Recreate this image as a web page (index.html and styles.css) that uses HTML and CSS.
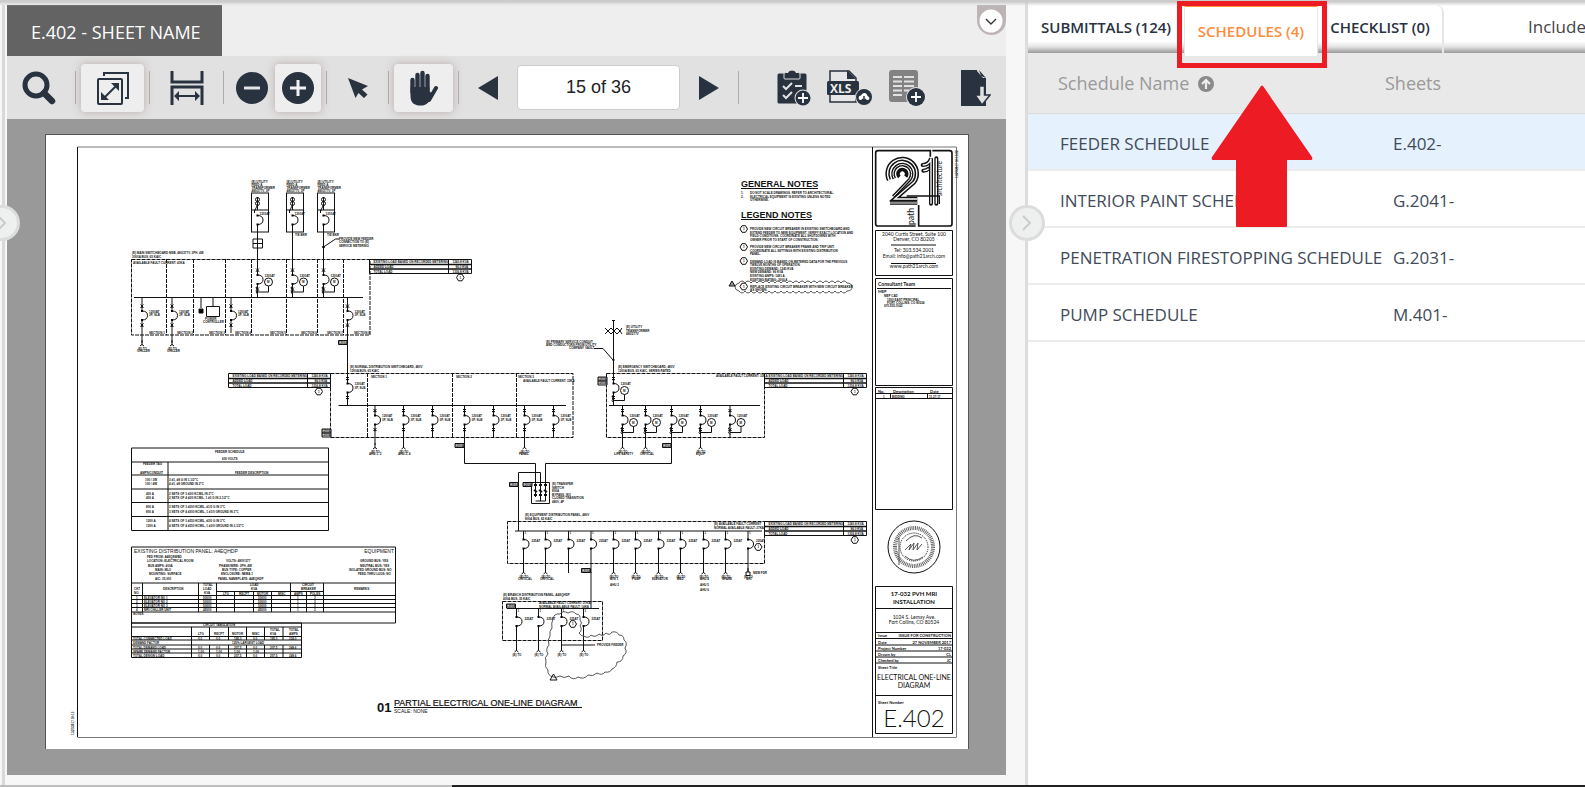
FILE: index.html
```html
<!DOCTYPE html>
<html lang="en">
<head>
<meta charset="utf-8">
<title>E.402 - Sheet Name</title>
<link rel="stylesheet" href="styles.css">
</head>
<body>
<div class="app">
<main class="workspace">
  <section class="viewer">
    <header class="viewer-head">
      <h1 class="sheet-tab">E.402 - SHEET NAME</h1>
      <button class="collapse" aria-label="Collapse header"><svg width="24" height="24" viewBox="0 0 24 24"><circle cx="12" cy="12" r="11.5" fill="#fff"/><path d="M7 10l5 5 5-5" fill="none" stroke="#333" stroke-width="1.4"/></svg></button>
    </header>
    <div class="toolbar">
      <button class="tool w-search" aria-label="Search"><svg width="34" height="34" viewBox="0 0 34 34"><circle cx="14" cy="14" r="11" fill="none" stroke="#29323f" stroke-width="5"/><path d="M22 22l8 8" stroke="#29323f" stroke-width="6.500" stroke-linecap="round"/></svg></button>
      <span class="sep"></span>
      <button class="tool active w-wide" aria-label="Fit page"><svg width="34" height="34" viewBox="0 0 34 34" fill="none" stroke="#29323f" stroke-width="2"><rect x="2" y="8" width="24" height="25" rx="1"/><path d="M8 5V2h24v25h-3" /><path d="M8 27L21 14"/><path d="M15 12h8v8zM5 21v8h8z" fill="#29323f" stroke="none"/></svg></button>
      <span class="sep"></span>
      <button class="tool w-wide" aria-label="Fit width"><svg width="34" height="34" viewBox="0 0 34 34" fill="none" stroke="#29323f" stroke-width="2"><path d="M2 0v11h30V0M2 34V16h30v18" stroke-width="3"/><path d="M5 25h24"/><path d="M4 25l5-5v10zM30 25l-5-5v10z" fill="#29323f" stroke="none"/></svg></button>
      <span class="sep"></span>
      <button class="tool w-zoom" aria-label="Zoom out"><svg width="32" height="32" viewBox="0 0 32 32"><circle cx="16" cy="16" r="16" fill="#29323f"/><path d="M8 16h16" stroke="#e5e5e5" stroke-width="3"/></svg></button>
      <button class="tool active w-zoom" aria-label="Zoom in"><svg width="32" height="32" viewBox="0 0 32 32"><circle cx="16" cy="16" r="16" fill="#29323f"/><path d="M8 16h16M16 8v16" stroke="#f2f2f2" stroke-width="3"/></svg></button>
      <span class="sep"></span>
      <button class="tool w-cursor" aria-label="Select"><svg width="22" height="22" viewBox="0 0 22 22" fill="#29323f"><path d="M1 1l20 8-6 3.500 5.500 5-3.500 3.500L11.500 16l-3 5z"/></svg></button>
      <span class="sep"></span>
      <button class="tool active w-hand" aria-label="Pan"><svg width="28" height="36" viewBox="0 0 28 36" fill="none" stroke="#29323f" stroke-linecap="round" stroke-linejoin="round"><path d="M2.500 10v12M7.500 5v15M12.500 3v17M17.500 6v15" stroke-width="4.400"/><path d="M26 18l-7 12" stroke-width="4"/><path d="M.5 17v9c0 7 4 9.500 10 9.500 5 0 7-1.500 9-5l4-6-4-3V17z" fill="#29323f" stroke="none"/></svg></button>
      <span class="sep"></span>
      <button class="tool w-step" aria-label="Previous page"><svg width="20" height="24" viewBox="0 0 20 24"><path d="M20 0v24L0 12z" fill="#29323f"/></svg></button>
      <input class="page-no" type="text" value="15 of 36" aria-label="Page">
      <button class="tool w-step" aria-label="Next page"><svg width="20" height="24" viewBox="0 0 20 24"><path d="M0 0v24l20-12z" fill="#29323f"/></svg></button>
      <span class="sep"></span>
      <div class="exports">
        <button class="tool" aria-label="Add checklist"><svg width="34" height="36" viewBox="0 0 34 36"><path d="M2 3.500h6v4h14v-4h6q1.500 0 1.500 1.500v27q0 1.500-1.500 1.500H2q-1.500 0-1.500-1.500V5Q.5 3.500 2 3.500z" fill="#29323f"/><path d="M7 7V4q0-1.500 1.500-1.500H11Q11.500 0 15 0t4 2.500h2.500Q23 2.500 23 4v4q0 1-1 1H8Q7 9 7 8z" fill="#29323f" stroke="#e1e1e1"/><path d="M6 16l3 3 6-6M6 25l3 3 6-6M18 16h7" fill="none" stroke="#e1e1e1" stroke-width="2"/><circle cx="26" cy="28" r="8.500" fill="#e1e1e1"/><circle cx="26" cy="28" r="7.500" fill="#29323f"/><path d="M21 28h10M26 23v10" stroke="#fff" stroke-width="1.800"/></svg></button>
        <button class="tool" aria-label="Download XLS"><svg width="46" height="36" viewBox="0 0 46 36"><path d="M3 1h19l7 7v24H3z" fill="#e6e6e6" stroke="#29323f" stroke-width="1.500"/><path d="M20 0l9 9h-9z" fill="#29323f"/><rect y="11" width="32" height="14" rx="1.500" fill="#29323f"/><text x="3" y="23" class="xls">XLS</text><circle cx="37" cy="27" r="9" fill="#e1e1e1"/><circle cx="37" cy="27" r="8" fill="#29323f"/><path d="M33 30q-2-1-1-3.500 1-1 2-1 1-3 4-2.500 2 .5 2.500 3 2 .5 2 2.500-.5 1.500-2 1.500z" fill="#fff"/><path d="M37 26v5M35 29l2 2.500 2-2.500" fill="none" stroke="#29323f" stroke-width="1.500"/></svg></button>
        <button class="tool" aria-label="Add schedule"><svg width="38" height="36" viewBox="0 0 38 36"><rect width="29" height="32" rx="3" fill="#828282"/><path d="M4 7h9M15 7h10M4 11.500h9M15 11.500h10M4 16h9M15 16h10M4 20.500h9M15 20.500h5M4 25h9" stroke="#e1e1e1" stroke-width="2"/><circle cx="27" cy="27" r="10" fill="#e1e1e1"/><circle cx="27" cy="27" r="9" fill="#29323f"/><path d="M22 27h10M27 22v10" stroke="#fff" stroke-width="1.800"/></svg></button>
      </div>
      <button class="tool export" aria-label="Export sheet"><svg width="30" height="36" viewBox="0 0 30 36"><path d="M0 0h16l9 8v28H0z" fill="#29323f"/><path d="M16 0v1l6 7h3V6l-5-6z" fill="#e1e1e1"/><path d="M18 0l7 8-5-2z" fill="#29323f"/><path d="M18.500 16h5v9H29l-8 10-7-10h4.500z" fill="#e1e1e1" stroke="#29323f" stroke-width="1.500"/></svg></button>
    </div>
    <div class="canvas">
<svg class="paper" viewBox="45 134 924 615" role="img" aria-label="Partial electrical one-line diagram">
<defs>
  <g id="x"><path d="M-1.500-1.500l3 3m0-3l-3 3"/><path d="M-1.200 1.200h2.400"/></g>
  <g id="arc"><path d="M0 0q5.500 0 5.500 4.500T0 9"/><rect x="-1" y="-1" width="2" height="2" fill="#000" stroke="none"/><rect x="-1" y="8" width="2" height="2" fill="#000" stroke="none"/></g>
  <g id="gnd"><path d="M0-5V0M-2 1q2-3 4 0"/><text x="-4" y="4.500">(E) TO</text></g>
  <g id="brk"><path d="M0 0v10M0 19v13"/><use href="#x" y="5"/><use href="#arc" y="10"/><use href="#x" y="24"/><text x="7" y="11.500">1200AT</text><text x="7" y="15">3P, SLB</text></g>
  <g id="meter"><path d="M0 0v10M0 19v13"/><use href="#x" y="5"/><use href="#arc" y="10"/><use href="#x" y="24"/><text x="7" y="11.500">1200AT</text><circle cx="11" cy="17" r="4" fill="#fff"/><text x="9.500" y="18">M</text><path d="M11 21v6H0"/><path d="M0 21q-3 2 0 4-3 2 0 4"/></g>
  <g id="sw"><path d="M0 0v9M0 17v25"/><use href="#arc" y="8.500"/><text x="8" y="11">225AT</text><text x="1" y="3">1</text></g>
  <g id="hex"><path d="M-3.500 0l2-3.300h3.500l2 3.300-2 3.300h-3.500z" fill="#fff"/><text x="-.5" y="1">1</text></g>
  <g id="xf"><rect width="17" height="39" fill="#fff"/><path d="M0 17h17M6 4v13M6 32v8"/><circle cx="6" cy="6.500" r="2"/><circle cx="6" cy="10.500" r="2"/><path d="M6 12l-3 6M3 17v3"/><use href="#arc" x="6" y="22.500"/><text x="8" y="22">1200AT</text><text y="-10">(E) UTILITY</text><text y="-7">FEED A</text><text y="-4">TRANSFORMER</text><text y="-1">480/277V, 3P</text></g>
  <g id="loads"><path d="M0 0h102M0 14h102"/><path d="M0 5h102M0 9.500h102" stroke-width="1.600"/><path d="M0 0v14M79 0v14M102 0v14"/><text x="4" y="3.600">EXISTING LOAD BASED ON RECORDED METERING</text><text x="4" y="8.200">ADDED LOAD</text><text x="4" y="13">TOTAL LOAD</text><text x="83" y="3.600">1240.8 KVA</text><text x="86" y="8.200">96.0 KVA</text><text x="83" y="13">1336.8 KVA</text></g>
  <g id="tag"><path d="M0 0h9v4H0z" fill="#ddd"/><text x="0" y="3">1200A</text></g>
</defs>
<g class="ink">
  <!-- sheet frame -->
  <path d="M45.500 134v615M968.500 134v615M45 134.500h924" stroke="#555"/>
  <path d="M77.500 147h879M956.500 147v590M77.500 737.500h879" stroke="#777"/><path d="M77.500 147v590M872.500 147v590"/>
  <path d="M875.500 230.500h77v45h-77zM875.500 278.500h77v107h-77zM875.500 387.500h77v122h-77zM875.500 586.500h77v147h-77z"/>
  <path d="M875.500 608.500h77M875.500 632.500h77M875.500 638.500h77M875.500 645h77M875.500 651h77M875.500 657h77M875.500 663h77M875.500 695.500h77M875.500 393.500h77M875.500 398.500h77M890.500 393v5M927.500 393v5M877 288.500h74"/>
  <!-- main switchboard -->
  <g class="dash"><path d="M131.500 259.500h238.500v75.500h-238.500z"/><path d="M166.500 259v76M193.500 259v76M225.500 259v76M251.500 259v76M286.500 259v76M317.500 259v76M343.500 259v76"/></g>
  <path d="M134 297.500h229" stroke-width="1.200"/>
  <use href="#xf" x="251.500" y="193"/><use href="#xf" x="286.500" y="193"/><use href="#xf" x="317.500" y="193"/>
  <path d="M257.500 232v33M292.500 232v33M323.500 232v33"/>
  <path d="M253 239h9.500v9H253zM253 243.500h9.500"/><path d="M323.500 247l12-8h4"/><circle cx="323.500" cy="247" r="1" fill="#000"/>
  <use href="#meter" x="257.500" y="265"/><use href="#meter" x="292.500" y="265"/><use href="#meter" x="323.500" y="265"/>
  <use href="#brk" x="142" y="301"/><use href="#brk" x="172" y="301"/><use href="#brk" x="231" y="301"/><use href="#brk" x="347.500" y="301"/>
  <path d="M142 297v4M172 297v4M231 297v4M347.500 297v4M142 333v10M172 333v10M347.500 333v44M201 297v11M213 297v9"/>
  <path d="M199 309h4v4h-4z" fill="#000"/><path d="M206.500 306.500h13v10h-13z"/>
  <use href="#gnd" x="142" y="345"/><use href="#gnd" x="172" y="345"/><use href="#tag" x="338.500" y="340.500"/>
  <use href="#loads" x="369.500" y="259.500"/><use href="#hex" x="460" y="277.500"/>
  <!-- switchboard A -->
  <g class="dash"><path d="M330.500 373.500H573v64H330.500zM367.500 373v64M452.500 373v64M516.500 373v64M606.500 373.500h158v64h-158z"/></g>
  <path d="M338.500 405.500H566M609 405.500h151" stroke-width="1.200"/>
  <use href="#brk" x="347.500" y="373.500"/><use href="#brk" x="375" y="405.500"/><use href="#brk" x="403.500" y="405.500"/><use href="#brk" x="432.500" y="405.500"/><use href="#brk" x="464.500" y="405.500"/><use href="#brk" x="493.500" y="405.500"/><use href="#brk" x="524.500" y="405.500"/><use href="#brk" x="553.500" y="405.500"/>
  <path d="M375 437v8M403.500 437v8M524.500 437v8M464.500 437v26.500h71V497"/>
  <use href="#gnd" x="375" y="448"/><use href="#gnd" x="403.500" y="448"/><use href="#gnd" x="524.500" y="448"/>
  <use href="#tag" x="455" y="443.500"/><use href="#tag" x="322" y="429"/><use href="#tag" x="322" y="433"/>
  <use href="#loads" x="228.500" y="373.500"/><use href="#hex" x="318.500" y="391.500"/>
  <!-- switchboard B -->
  <use href="#meter" x="613.500" y="373.500"/><path d="M613.500 320v54M612 320.500h3M594 348.500h9l10 11.500"/><circle cx="613.500" cy="360" r=".8"/>
  <path d="M605 328l3 3 3-3 3 3 3-3 3 3 2-3M605 334l3-3 3 3 3-3 3 3 3-3 2 3"/>
  <use href="#meter" x="622.500" y="405.500"/><use href="#meter" x="645.500" y="405.500"/><use href="#meter" x="671.500" y="405.500"/><use href="#meter" x="700.500" y="405.500"/><use href="#meter" x="730" y="405.500"/>
  <path d="M622.500 437v8M645.500 437v8M700.500 437v8M671.500 437v26.500h-126V497"/>
  <use href="#gnd" x="622.500" y="448"/><use href="#gnd" x="645.500" y="448"/><use href="#gnd" x="700.500" y="448"/>
  <use href="#tag" x="662.500" y="443.500"/><use href="#tag" x="598" y="377"/><use href="#tag" x="598" y="381"/>
  <use href="#loads" x="764.500" y="373.500"/><use href="#hex" x="854.500" y="391.500"/>
  <!-- transfer switch -->
  <path d="M531.500 482.500h18v21h-18zM540.500 497v-24.500h-22V531M535.500 501h10v-4M540.500 497v4"/><path d="M534 485h3M539 485h3M544 485h3M534 495h3M539 495h3M544 495h3M534 490l3 2M539 490l3 2M544 490l3 2" stroke-width="2"/>
  <use href="#tag" x="509.500" y="482.500"/><use href="#tag" x="523" y="482.500"/>
  <!-- switchboard C -->
  <g class="dash"><path d="M507.500 521.500h257v42h-257zM502.500 601.500h100v39h-100z"/></g>
  <path d="M515 531h247M507 608.500h92"/>
  <use href="#sw" x="523.500" y="531"/><use href="#sw" x="545.500" y="531"/><use href="#sw" x="568.500" y="531"/><use href="#sw" x="591" y="531"/><use href="#sw" x="613.500" y="531"/><use href="#sw" x="635.500" y="531"/><use href="#sw" x="658.500" y="531"/><use href="#sw" x="680.500" y="531"/><use href="#sw" x="703.500" y="531"/><use href="#sw" x="725.500" y="531"/><use href="#sw" x="748" y="531"/>
  <path d="M591 572v36"/><use href="#tag" x="581.500" y="568.500"/>
  <use href="#gnd" x="523.500" y="573"/><use href="#gnd" x="545.500" y="573"/><use href="#gnd" x="613.500" y="573"/><use href="#gnd" x="635.500" y="573"/><use href="#gnd" x="658.500" y="573"/><use href="#gnd" x="680.500" y="573"/><use href="#gnd" x="703.500" y="573"/><use href="#gnd" x="725.500" y="573"/><use href="#gnd" x="748" y="573"/>
  <path d="M746 572h4v3.500h-4z" fill="#fff"/>
  <use href="#loads" x="764.500" y="521.500"/><use href="#hex" x="854.500" y="540"/><use href="#hex" x="758" y="547"/>
  <use href="#sw" x="516.500" y="608.500"/><use href="#sw" x="538.500" y="608.500"/><use href="#sw" x="561.500" y="608.500"/><use href="#sw" x="583.500" y="608.500"/>
  <use href="#gnd" x="516.500" y="651"/><use href="#gnd" x="538.500" y="651"/><use href="#gnd" x="561.500" y="651"/><use href="#gnd" x="583.500" y="651"/>
  <use href="#tag" x="506.500" y="604"/><use href="#hex" x="572.500" y="624"/><path d="M562 645h33"/>
  <path class="cloud" d="M553 619q1-6 7-5q3-4 8-1q5-3 8 1q5 0 4 6q3 3 0 6q3 4-1 7q3 4 5 3q4 3 7-1q4 3 8-1q4 3 7-1q4 3 6-1q5-1 7 3q5 0 5 5q4 3 1 8q3 5-2 8q0 6-6 6q0 5-5 7q-2 4-7 3q-3 4-8 1q-4 4-9 2q-4 5-10 2q-5 4-9-1q-5 3-9 0q-4 2-7 1q-6-2-5-7q-4-3-2-8q-2-5 2-8q-3-5 1-9q-2-5 1-9q-1-5 2-8q-1-5 1-9z"/><path d="M550 680l3.500-6 3.500 6z"/>
  <!-- schedules -->
  <path d="M131.500 448h197v82.500h-197zM168 462v68.500M131.500 462h197M131.500 475h197M131.500 489h197M131.500 502.500h197M131.500 516.500h197"/>
  <path d="M131.500 547h264v76h-264zM131.500 583h264M216.500 591.500h107M131.500 595.500h264M131.500 599.500h264M131.500 603.500h264M131.500 607.500h264M131.500 612h264M142.500 583v29M198.500 583v29M216.500 583v29M234.500 591v21M253.500 591v21M271.500 591v21M290.500 583v29M306.500 591v21M323.500 583v29"/>
  <path d="M131.500 623h170v34.500h-170zM131.500 627h170M131.500 636.500h170M131.500 640h170M131.500 645h170M131.500 649h170M131.500 653h170M191.500 627v30M209.500 627v13M228.500 627v13M246.500 627v13M264.500 627v13M283 627v13M209.500 645v12M228.500 645v12M246.500 645v12M264.500 645v12M283 645v12"/>
  <!-- legend -->
  <path d="M741 188.500h77M741 219.500h71M394 707.500h188"/>
  <use href="#hex" x="743.500" y="229"/><use href="#hex" x="743.500" y="247"/><use href="#hex" x="743.500" y="261"/><use href="#hex" x="743.500" y="286.500"/>
  <path class="cloud" d="M739 283q3-4 6 0q3-4 6 0q3-4 6 0q3-4 6 0q3-4 6 0q3-4 6 0q3-4 6 0q3-4 6 0q3-4 6 0q3-4 6 0q3-4 6 0q3-4 6 0q3-4 6 0q3-4 6 0q3-4 6 0q3-4 6 0q3-4 6 0q3-4 6 0q5 0 5 4q0 4-5 4q-3 4-6 0q-3 4-6 0q-3 4-6 0q-3 4-6 0q-3 4-6 0q-3 4-6 0q-3 4-6 0q-3 4-6 0q-3 4-6 0q-3 4-6 0q-3 4-6 0q-3 4-6 0q-3 4-6 0q-3 4-6 0q-3 4-6 0q-3 4-6 0q-3 4-6 0q-3 4-6 0q-4-1-4-4t4-4z"/><path d="M729 286l3-5 3 5z" fill="#999"/>
  <!-- seal -->
  <circle cx="914" cy="547" r="26"/><circle cx="914" cy="547" r="19" stroke-width="4" stroke-dasharray="1 .8" stroke="#666"/><circle cx="914" cy="547" r="14" stroke-dasharray="1 1"/><path d="M905 550l6-6-2 6 5-7-1 7 5-7-1 7 5-6M899 538v27M905 556q8 8 18 1M906 541q8-9 16-3" stroke="#555"/>
  <!-- practice logo -->
  <g transform="translate(860 130) scale(.3333)">
    <path d="M211 80V62H54q-7 0-7 7v212q0 7 7 7h113M217 62h52q7 0 7 7v212q0 7-7 7h-93v-63" stroke-width="5"/>
    <path d="M87 150A44 44 0 1 1 162 157L104 207h68" stroke-width="13"/><path d="M103 146A28 28 0 1 1 149 149L100 200" stroke-width="11"/><path d="M118 141A13 13 0 1 1 137 140M90 219h82" stroke-width="11"/>
    <path d="M87 150A44 44 0 1 1 162 157L104 207h68" stroke="#fff" stroke-width="4"/><path d="M103 146A28 28 0 1 1 149 149L100 200M90 219h82" stroke="#fff" stroke-width="3"/>
    <path d="M188 105q20 0 25-20v136M190 122q10 0 16-6M229 85v136" stroke-width="12" stroke-linecap="round"/><path d="M188 105q20 0 25-20v136M190 122q10 0 16-6M229 85v136" stroke="#fff" stroke-width="4"/>
    <path d="M140 198h98v24" stroke-width="4"/>
    <text class="logo" transform="translate(247 198) rotate(-90)">architecture</text><text class="logo big" transform="translate(163 285) rotate(-90)">path</text>
  </g>
  <path d="M891 245h45M891 263.500h45"/>
</g>
<g class="lettering">
  <text x="741" y="187" class="h">GENERAL NOTES</text><text x="741" y="218" class="h">LEGEND NOTES</text>
  <text x="377" y="712" class="num">01</text><text x="394" y="706" class="title">PARTIAL ELECTRICAL ONE-LINE DIAGRAM</text><text x="394" y="713" class="s5">SCALE: NONE</text>
  <text x="741" y="194">1.</text><text x="750" y="194">DO NOT SCALE DRAWINGS. REFER TO ARCHITECTURAL.</text><text x="741" y="198">2.</text><text x="750" y="198">ELECTRICAL EQUIPMENT IS EXISTING UNLESS NOTED</text><text x="750" y="201">OTHERWISE.</text>
  <text x="750" y="230">PROVIDE NEW CIRCUIT BREAKER IN EXISTING SWITCHBOARD AND</text><text x="750" y="233.500">EXTEND FEEDER TO NEW EQUIPMENT. VERIFY EXACT LOCATION AND</text><text x="750" y="237">FIELD CONDITIONS. COORDINATE ALL SHUTDOWNS WITH</text><text x="750" y="241">OWNER PRIOR TO START OF CONSTRUCTION.</text>
  <text x="750" y="248">PROVIDE NEW CIRCUIT BREAKER FRAME AND TRIP UNIT.</text><text x="750" y="252">COORDINATE ALL SETTINGS WITH EXISTING DISTRIBUTION</text><text x="750" y="255">PANEL.</text>
  <text x="750" y="263">DEMAND LOAD IS BASED ON METERED DATA FOR THE PREVIOUS</text><text x="750" y="266">TWELVE MONTHS OF OPERATION.</text><text x="750" y="270">EXISTING DEMAND: 1240 KVA</text><text x="750" y="273">NEW DEMAND: 96 KVA</text><text x="750" y="277">EXISTING AMPS: 1491 A</text><text x="750" y="281">EXISTING RATING: 3000 A</text><text x="750" y="288">REPLACE EXISTING CIRCUIT BREAKER WITH NEW CIRCUIT BREAKER</text><text x="750" y="291">AS SHOWN.</text>
  <text x="132" y="254">(E) MAIN SWITCHBOARD MSB, 480/277V, 3PH, 4W</text><text x="132" y="258">3000A BUS, 65 KAIC</text><text x="133" y="264">AVAILABLE FAULT CURRENT: 41KA</text>
  <text x="339" y="240">PROVIDE NEW FEEDER</text><text x="339" y="243">CONNECTION TO (E)</text><text x="339" y="247">SERVICE METERING</text><text x="295" y="236">TIE BKR</text><text x="327" y="236">TIE BKR</text>
  <text x="149" y="334">SECTION 1</text><text x="177" y="334">SECTION 2</text><text x="209" y="334">SECTION 3</text><text x="235" y="334">SECTION 4</text><text x="270" y="334">SECTION 5</text><text x="301" y="334">SECTION 6</text><text x="327" y="334">SECTION 7</text><text x="354" y="334">SECTION 8</text><text x="205" y="320">POWER</text><text x="203" y="323">CONTROLLER</text>
  <text x="137" y="352">CHILLER</text><text x="167" y="352">CHILLER</text>
  <text x="350" y="368">(E) NORMAL DISTRIBUTION SWITCHBOARD, 480V</text><text x="350" y="372">1200A BUS, 65 KAIC</text><text x="371" y="378">SECTION 1</text><text x="456" y="378">SECTION 2</text><text x="518" y="378">SECTION 3</text><text x="523" y="382">AVAILABLE FAULT CURRENT: 32KA</text><text x="716" y="377">AVAILABLE FAULT CURRENT: 32KA</text>
  <text x="618" y="368">(E) EMERGENCY SWITCHBOARD, 480V</text><text x="618" y="372">1200A BUS, 65 KAIC, SERIES RATED</text>
  <text x="546" y="343">(E) PRIMARY SERVICE CONDUIT</text><text x="546" y="346">AND CONDUCTORS FROM UTILITY</text><text x="569" y="349">COMPANY VAULT</text><text x="626" y="328">(E) UTILITY</text><text x="626" y="332">TRANSFORMER</text><text x="626" y="335">480/277V</text>
  <text x="369" y="455">AHU-1, 2</text><text x="398" y="455">AHU-3, 4</text><text x="519" y="455">PANEL</text><text x="614" y="455">LIFE SAFETY</text><text x="640" y="455">CRITICAL</text><text x="696" y="455">EQUIP</text>
  <text x="552" y="485">(E) TRANSFER</text><text x="552" y="489">SWITCH</text><text x="552" y="492">800A</text><text x="552" y="496">BYPASS, ISO</text><text x="552" y="499">CLOSED TRANSITION</text><text x="552" y="503">480V, 4P</text>
  <text x="525" y="516">(E) EQUIPMENT DISTRIBUTION PANEL, 480V</text><text x="525" y="520">800A BUS, 65 KAIC</text><text x="714" y="525">(E) AVAILABLE FAULT CURRENT</text><text x="714" y="529">NORMAL AVAILABLE FAULT: 27KA</text>
  <text x="518" y="580">CRITICAL</text><text x="540" y="580">CRITICAL</text><text x="610" y="580">ATS 1</text><text x="610" y="586">AHU 2</text><text x="632" y="580">PUMP</text><text x="652" y="580">ELEVATOR</text><text x="677" y="580">MED</text><text x="700" y="580">AHU 4</text><text x="700" y="586">AHU 5</text><text x="700" y="591">AHU 6</text><text x="722" y="580">SPARE</text><text x="746" y="580">MRI</text><text x="753" y="574">NEW FDR</text>
  <text x="503" y="596">(E) BRANCH DISTRIBUTION PANEL, A4EQHDP</text><text x="503" y="600">400A BUS, 35 KAIC</text><text x="539" y="604">AVAILABLE FAULT CURRENT: 27KA</text><text x="539" y="608">NORMAL AVAILABLE FAULT: 14KA</text><text x="597" y="646">PROVIDE FEEDER</text>
  <g class="dense"><text x="215" y="452.500" class="s4">FEEDER SCHEDULE</text><text x="222" y="460">600 VOLTS</text><text x="143" y="465">FEEDER TAG</text><text x="140" y="474">AMPS/CONDUIT</text><text x="235" y="474">FEEDER DESCRIPTION</text><text x="145" y="481">100 / 3W</text><text x="145" y="485">100 / 4W</text><text x="169" y="481">3 #1, #8 G IN 1-1/2"C</text><text x="169" y="485">4 #1, #8 GROUND IN 2"C</text><text x="146" y="495">400 A</text><text x="146" y="499">400 A</text><text x="169" y="495">2 SETS OF 3 #3/0 KCMIL IN 2"C</text><text x="169" y="499">2 SETS OF 4 #3/0 KCMIL, 1 #3 G IN 2-1/2"C</text><text x="146" y="508">800 A</text><text x="146" y="513">800 A</text><text x="169" y="508">3 SETS OF 3 #300 KCMIL, #1/0 G IN 3"C</text><text x="169" y="513">3 SETS OF 4 #300 KCMIL, 1 #1/0 GROUND IN 3"C</text><text x="146" y="522">1200 A</text><text x="146" y="527">1200 A</text><text x="169" y="522">4 SETS OF 3 #350 KCMIL, #3/0 G IN 3"C</text><text x="169" y="527">4 SETS OF 4 #350 KCMIL, 1 #3/0 GROUND IN 3-1/2"C</text></g>
  <text x="134" y="553" class="s5">EXISTING DISTRIBUTION PANEL: A4EQHDP</text><text x="394" y="553" class="s5 end">EQUIPMENT</text>
  <g class="dense"><text x="147" y="558">FED FROM:  A4EQSWBD</text><text x="147" y="562">LOCATION:  ELECTRICAL ROOM</text><text x="148" y="567">BUS AMPS:  400A</text><text x="155" y="571">MAIN:  MLO</text><text x="149" y="575">MOUNTING:  SURFACE</text><text x="155" y="580">AIC:  35,000</text><text x="226" y="562">VOLTS:  480Y/277</text><text x="219" y="567">PHASE/WIRE:  3PH, 4W</text><text x="222" y="571">BUS TYPE:  COPPER</text><text x="221" y="575">ENCLOSURE:  NEMA 1</text><text x="218" y="580">PANEL NAMEPLATE: A4EQHDP</text><text x="360" y="562">GROUND BUS:  YES</text><text x="360" y="567">NEUTRAL BUS:  YES</text><text x="349" y="571">ISOLATED GROUND BUS:  NO</text><text x="358" y="575">FEED-THRU LUGS:  NO</text>
  <text x="134" y="590">CKT</text><text x="134" y="594">NO.</text><text x="163" y="590">DESCRIPTION</text><text x="203" y="586">TOTAL</text><text x="203" y="590">LOAD</text><text x="204" y="594">KVA</text><text x="250" y="586">LOAD</text><text x="251" y="590">KVA</text><text x="302" y="586">CIRCUIT</text><text x="301" y="590">BREAKER</text><text x="354" y="590">REMARKS</text><text x="223" y="594.500">LTG</text><text x="239" y="594.500">RECPT</text><text x="257" y="594.500">MOTOR</text><text x="278" y="594.500">MISC</text><text x="294" y="594.500">AMPS</text><text x="310" y="594.500">POLES</text>
  <text x="136" y="598.500">1</text><text x="144" y="598.500">ELEVATOR NO 1</text><text x="136" y="602.700">2</text><text x="144" y="602.700">ELEVATOR NO 2</text><text x="136" y="606.700">3</text><text x="144" y="606.700">ELEVATOR NO 3</text><text x="136" y="611">4</text><text x="144" y="611">MRI CHILLER UNIT</text><text x="203" y="598.500">50000</text><text x="203" y="602.700">50000</text><text x="203" y="606.700">50000</text><text x="203" y="611">45000</text><text x="258" y="598.500">50000</text><text x="258" y="602.700">50000</text><text x="258" y="606.700">50000</text><text x="258" y="611">45000</text><text x="297" y="598.500">1</text><text x="314" y="598.500">3</text><text x="297" y="602.700">1</text><text x="314" y="602.700">3</text><text x="297" y="606.700">1</text><text x="314" y="606.700">3</text><text x="297" y="611">1</text><text x="314" y="611">3</text><text x="133" y="615">NOTES:</text>
  <text x="203" y="626">CIRCUIT TABULATION</text><text x="198" y="635">LTG</text><text x="214" y="635">RECPT</text><text x="232" y="635">MOTOR</text><text x="252" y="635">MISC</text><text x="270" y="631">TOTAL</text><text x="270" y="635">KVA</text><text x="289" y="631">TOTAL</text><text x="289" y="635">AMPS</text><text x="133" y="639.500">TOTAL CONNECTED LOAD</text><text x="198" y="639.500">0.0</text><text x="216" y="639.500">0.0</text><text x="234" y="639.500">195.0</text><text x="253" y="639.500">0.0</text><text x="270" y="639.500">195.0</text><text x="289" y="639.500">234.0</text><text x="133" y="644">DEMAND FACTOR</text><text x="232" y="644">125% LARGEST LOAD</text><text x="133" y="648.500">TOTAL DEMAND LOAD</text><text x="198" y="648.500">0.0</text><text x="216" y="648.500">0.0</text><text x="234" y="648.500">207.5</text><text x="253" y="648.500">0.0</text><text x="270" y="648.500">207.5</text><text x="289" y="648.500">249.6</text><text x="133" y="652.500">SPARE DEMAND FACTOR</text><text x="198" y="652.500">1.00</text><text x="216" y="652.500">1.00</text><text x="234" y="652.500">1.00</text><text x="253" y="652.500">1.00</text><text x="133" y="656.800">TOTAL DESIGN LOAD</text><text x="198" y="656.800">0.0</text><text x="216" y="656.800">0.0</text><text x="234" y="656.800">207.5</text><text x="253" y="656.800">0.0</text><text x="270" y="656.800">207.5</text><text x="289" y="656.800">249.6</text></g>
  <g class="block"><g text-anchor="middle"><text x="914" y="236">2040 Curtis Street, Suite 100</text><text x="914" y="241">Denver, CO 80205</text><text x="914" y="252">Tel: 303.534.2001</text><text x="914" y="258">Email: info@path21arch.com</text><text x="914" y="268">www.path21arch.com</text><text x="914" y="596" class="s6">17-032 PVH MRI</text><text x="914" y="604" class="s6">INSTALLATION</text><text x="914" y="619">1024 S. Lemay Ave.</text><text x="914" y="624">Fort Collins, CO 80524</text><text x="914" y="680" class="s7">ELECTRICAL ONE-LINE</text><text x="914" y="688" class="s7">DIAGRAM</text><text x="914" y="727" class="sheet">E.402</text></g>
  <g class="small"><text x="878" y="286" class="team">Consultant Team</text><text x="878" y="293">MEP</text><text x="878" y="392.500">No.</text><text x="893" y="392.500">Description</text><text x="930" y="392.500">Date</text><text x="878" y="637">Issue</text><text x="878" y="643.500">Date</text><text x="878" y="649.500">Project Number</text><text x="878" y="655.500">Drawn by</text><text x="878" y="662">Checked by</text><text x="878" y="669">Sheet Title</text><text x="878" y="704">Sheet Number</text><g text-anchor="end"><text x="951" y="637">ISSUE FOR CONSTRUCTION</text><text x="951" y="643.500">27 NOVEMBER 2017</text><text x="951" y="649.500">17-032</text><text x="951" y="655.500">CL</text><text x="951" y="662">JC</text></g></g></g>
  <text x="884" y="297">MEP CAD</text><text x="887" y="301">1500 EAST PRINCIPAL</text><text x="887" y="304">FORT COLLINS, CO 80524</text><text x="884" y="307">970.555.0142</text><text x="883" y="397.500">1</text><text x="892" y="397.500">BIDDING</text><text x="929" y="397.500">11.27.17</text>
  <text transform="translate(958 178) rotate(-90)">11/27/2017 10:15:22</text><text transform="translate(74 735) rotate(-90)">11/27/2017 10:15</text>
</g>
</svg>
    </div>
    <button class="knob knob-left" aria-label="Expand left panel"><svg width="12" height="18" viewBox="0 0 12 18"><path d="M2 2l7 7-7 7" fill="none" stroke="#ccc" stroke-width="2"/></svg></button>
  </section>
  <aside class="side">
    <button class="knob knob-right" aria-label="Collapse right panel"><svg width="12" height="18" viewBox="0 0 12 18"><path d="M2 2l7 7-7 7" fill="none" stroke="#ccc" stroke-width="2"/></svg></button>
    <nav class="tabs">
      <button class="tab first">SUBMITTALS (124)</button>
      <div class="current">
        <button class="tab on">SCHEDULES (4)</button>
        <span class="frame"></span>
        <svg class="pointer" width="102" height="143" viewBox="0 0 102 143"><path d="M50 1q1-1 2 0l49 71q1 3-1 3H76v66q0 1-1 1H26q-1 0-1-1V75H2q-2 0-1-3z" fill="#ed1c24"/></svg>
      </div>
      <button class="tab last">CHECKLIST (0)</button>
      <span class="include">Include</span>
    </nav>
    <table class="list">
      <thead><tr><th class="name" scope="col">Schedule Name <svg class="sort" width="16" height="16" viewBox="0 0 16 16"><circle cx="8" cy="8" r="8" fill="#8a8a8a"/><path d="M8 13V4M4 8l4-4 4 4" fill="none" stroke="#eee" stroke-width="2.200"/></svg></th><th scope="col">Sheets</th></tr></thead>
      <tbody>
        <tr class="picked"><td class="name">FEEDER SCHEDULE</td><td>E.402-</td></tr>
        <tr><td class="name">INTERIOR PAINT SCHEDULE</td><td>G.2041-</td></tr>
        <tr><td class="name">PENETRATION FIRESTOPPING SCHEDULE</td><td>G.2031-</td></tr>
        <tr><td class="name">PUMP SCHEDULE</td><td>M.401-</td></tr>
      </tbody>
    </table>
  </aside>
</main>
<div class="baseline"></div>
</div>
</body>
</html>
```
FILE: styles.css
```css
* { box-sizing: border-box; }
body { margin: 0; background: #f7f7f7; font-family: "Open Sans", "Noto Sans", sans-serif; color: #29323f; }
button { font: inherit; color: inherit; border: 0; padding: 0; background: none; }
svg { display: block; }

.app { display: flex; flex-direction: column; min-height: 100vh; position: relative; overflow: hidden; }
.app::before { content: ""; position: absolute; top: 0; left: 0; right: 0; height: 6px; background: linear-gradient(#cccccc 30%, rgba(204, 204, 204, 0)); z-index: 2; }
.workspace { flex: 1; display: flex; }
.baseline { height: 2px; background: linear-gradient(90deg, #bdbdbd 28.5%, #222 28.5%); }

.viewer { flex: 1; min-width: 0; display: flex; flex-direction: column; position: relative; padding: 5px 19px 10px 2px; border-left: 5px solid #f7f7f7; }
.viewer::before { content: ""; position: absolute; top: 5px; bottom: 0; left: -3px; width: 3px; background: #d9d9d9; }
.viewer-head { display: flex; justify-content: space-between; align-items: flex-start; background: #eeeeee; height: 51px; }
.sheet-tab { margin: 0; height: 51px; padding: 0 21px 0 24px; line-height: 54px; background: #636363; color: #fff; font-size: 18px; font-weight: 400; }
.collapse { width: 29px; height: 30px; padding: 4px 2px; background: #bdb5b5; border-radius: 0 0 15px 15px; }

.toolbar { display: flex; align-items: center; height: 63px; background: #e1e1e1; }
.tool { display: flex; align-items: center; justify-content: center; height: 48px; flex: none; }
.tool.active { background: #eeeeee; border-radius: 4px; box-shadow: 0 0 9px rgba(140, 110, 105, .45); }
.w-search { width: 63px; }
.w-wide { width: 63px; }
.w-zoom { width: 46px; }
.w-cursor { width: 51px; }
.w-hand { width: 59px; }
.w-step { width: 48px; }
.sep { flex: none; width: 1px; height: 33px; margin: 0 5px; background: #adadad; }
.page-no { width: 163px; height: 45px; margin: 0 5px; border: 1px solid #ccc; border-radius: 4px; background: #fff; text-align: center; font: 18px "Liberation Sans", Arial, sans-serif; color: #222; }
.exports { display: flex; gap: 16px; margin-left: 33px; }
.export { margin-left: 34px; }
.xls { font: 700 12px "Open Sans", sans-serif; fill: #eee; }

.canvas { flex: 1; background: #999999; padding: 15px 37px 26px 38px; }
.paper { width: 100%; height: auto; background: #fff; }
.ink { fill: none; stroke: #111; stroke-width: 1; }
.ink text, defs text, .lettering { font: 700 3px "Liberation Sans", Arial, sans-serif; fill: #111; stroke: none; }
.dash { stroke-dasharray: 4 1; }
.cloud { stroke: #555; }
.ink .logo { font: 400 20px Lato, sans-serif; }
.ink .big { font-size: 26px; }
.lettering .h { font-size: 9px; }
.lettering .title { font-size: 9px; font-weight: 400; stroke: #111; stroke-width: .2px; }
.lettering .num { font-size: 13px; }
.lettering .s4 { font-size: 3px; font-weight: 700; }
.lettering .s5 { font-size: 5px; font-weight: 400; }
.end { text-anchor: end; }
.block { font: 400 5px Lato, sans-serif; }
.block .small { font-size: 4px; font-weight: 700; }
.block .team { font-size: 5px; }
.block .s6 { font-size: 6px; font-weight: 700; }
.block .s7 { font-size: 7px; }
.block .sheet { font-size: 24px; font-weight: 300; }

.knob { position: absolute; top: 205px; width: 36px; height: 36px; display: flex; align-items: center; justify-content: center; border: 3px solid #dcdcdc; border-radius: 50%; background: #eef0f0; z-index: 3; }
.knob-left { left: -21px; }
.knob-right { left: -19px; }

.side { position: relative; width: 560px; flex: none; border-left: 3px solid #dcdcdc; background: #fff; }
.tabs { display: flex; align-items: flex-start; height: 53px; padding-top: 5px; background: linear-gradient(#fff 78%, #e4e4e4 88%, #9a9a9a); }
.tab { height: 48px; padding-bottom: 4px; font-size: 15px; font-weight: 600; white-space: nowrap; }
.first { width: 156px; padding-left: 13px; text-align: left; }
.current { position: relative; width: 134px; }
.on { width: 134px; height: 51px; padding: 0 0 2px; background: #fff; color: #ff8c3c; border-top: 2px solid #ff8c3c; border-right: 1px solid #e6e6e6; border-left: 1px solid #e6e6e6; position: relative; z-index: 1; }
.frame { position: absolute; top: -4px; left: -7px; width: 150px; height: 67px; border: 5px solid #ed1c24; z-index: 3; }
.pointer { position: absolute; top: 80px; left: 27px; z-index: 2; }
.last { width: 126px; border-right: 2px solid #e6e6e6; border-radius: 0 8px 0 0; }
.include { margin-left: auto; width: 57px; line-height: 44px; font-size: 17px; color: #444; white-space: nowrap; overflow: hidden; }

.list { width: 100%; border-collapse: separate; border-spacing: 0; table-layout: fixed; font-size: 17px; color: #414b59; }
.list th { height: 61px; padding: 0 0 0 12px; text-align: left; font-size: 18px; font-weight: 400; color: #999; background: #e9e9e9; border-bottom: 1px solid #dcdcdc; }
.list td { height: 57px; padding: 4px 0 0 20px; border-bottom: 2px solid #ececec; white-space: nowrap; }
.list td.name { width: 345px; padding-left: 32px; }
.list th.name { width: 345px; padding-left: 30px; }
.sort { display: inline-block; margin-left: 4px; vertical-align: -2px; }
.picked td { background: #e5f1fd; }
```
